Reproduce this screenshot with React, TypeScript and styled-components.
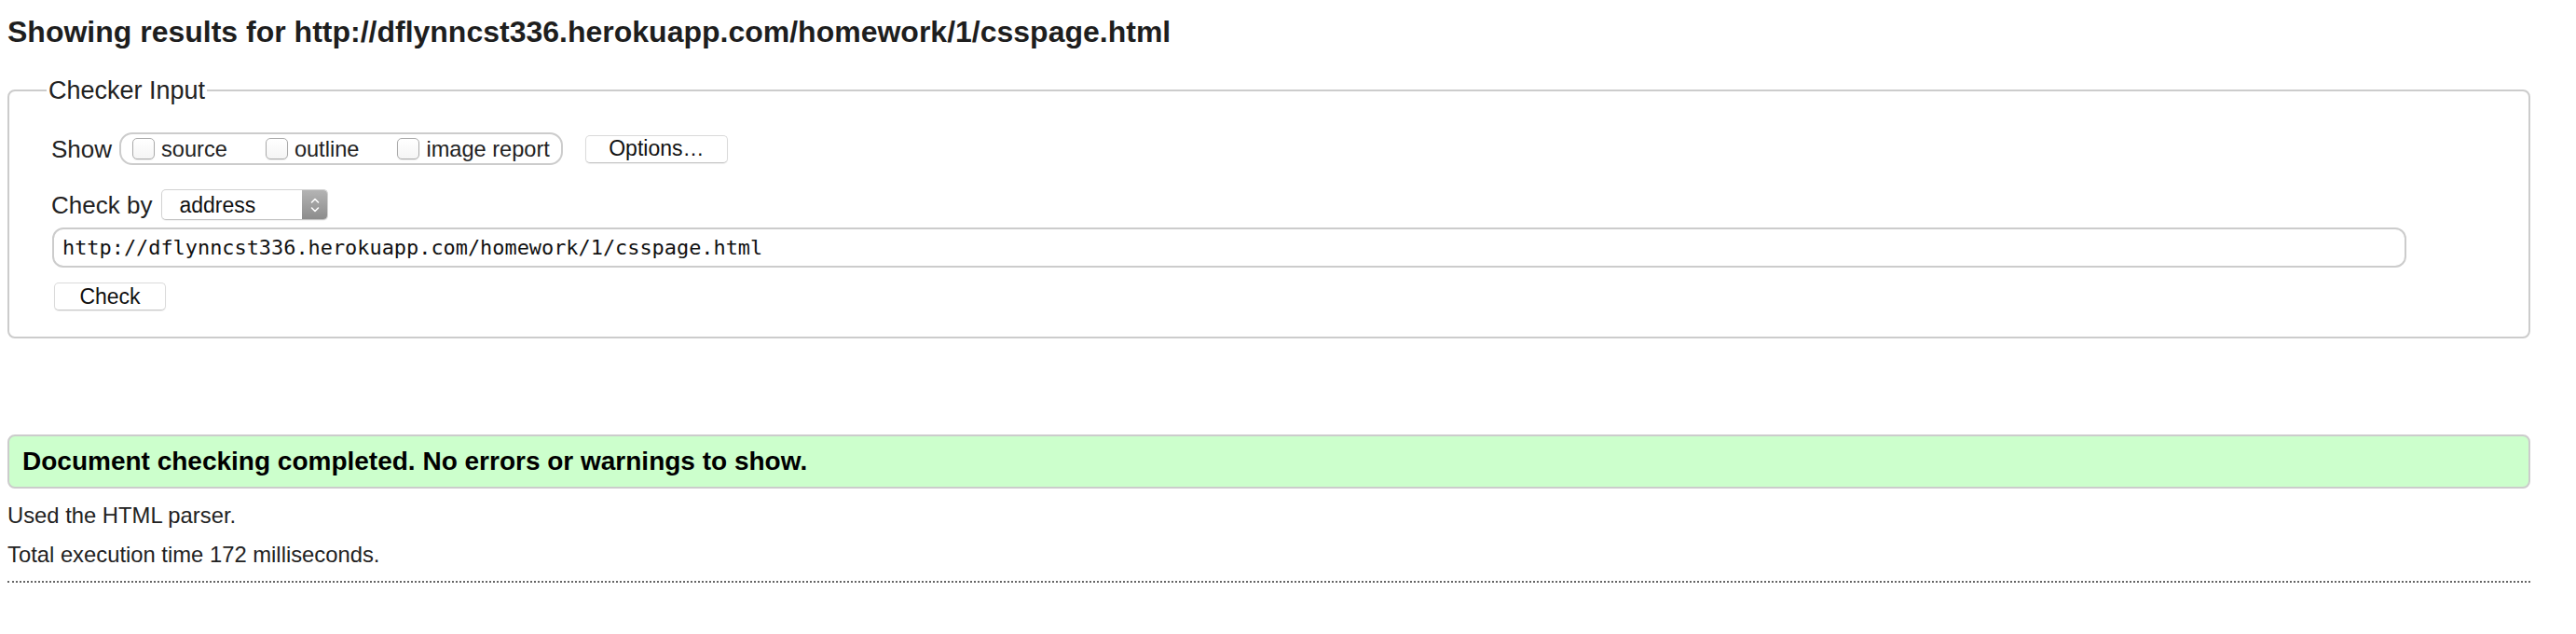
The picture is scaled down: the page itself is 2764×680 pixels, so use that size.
import styled, { createGlobalStyle } from "styled-components";

const GlobalStyle = createGlobalStyle`
  body {
    margin: 8px;
    background: #fff;
    color: #222;
    font-family: "Liberation Sans", Arial, Helvetica, sans-serif;
  }
`;

const Page = styled.div`
  display: flow-root;
  width: 2707px;
`;

const Title = styled.h2`
  margin: 8px 0 29px;
  font-size: 32px;
  line-height: 36px;
  font-weight: bold;
  color: #1e1e1e;
`;

const CheckerForm = styled.fieldset`
  margin: 0;
  padding: 29px 45px 28px 45px;
  border: 2px solid #ccc;
  border-radius: 8px;
`;

const Legend = styled.legend`
  margin-left: -5px;
  padding: 0 2px;
  font-size: 27px;
  line-height: 32px;
`;

const FieldRow = styled.div<{ $top?: number }>`
  display: flex;
  align-items: center;
  margin-top: ${(p) => p.$top ?? 0}px;
  font-size: 26px;
`;

const RowLabel = styled.span`
  font-size: 26px;
  line-height: 30px;
`;

const OptionGroup = styled.div`
  display: flex;
  align-items: center;
  gap: 41px;
  box-sizing: border-box;
  height: 35px;
  margin-left: 8px;
  padding: 0 12px;
  border: 2px solid #ccc;
  border-radius: 14px;
`;

const Option = styled.label`
  display: flex;
  align-items: center;
  gap: 7px;
  font-size: 23.6px;
  line-height: 28px;
`;

const Box = styled.input`
  appearance: none;
  margin: 0;
  width: 24px;
  height: 23px;
  border: 1px solid #aaa;
  border-radius: 5px;
  background: linear-gradient(#fff, #f5f5f5);
  box-shadow: 0 1px 1px rgba(0, 0, 0, 0.08);
`;

const Button = styled.button<{ $width: number; $left?: number }>`
  box-sizing: border-box;
  width: ${(p) => p.$width}px;
  height: 30px;
  margin-left: ${(p) => p.$left ?? 0}px;
  padding: 0;
  font-family: "Liberation Sans", Arial, sans-serif;
  font-size: 23px;
  color: #111;
  background: #fff;
  border: 1px solid #dadada;
  border-bottom-color: #c6c6c6;
  border-radius: 5px;
  box-shadow: 0 1px 1px rgba(0, 0, 0, 0.07);
`;

const SelectWrap = styled.div`
  position: relative;
  box-sizing: border-box;
  width: 179px;
  height: 33px;
  margin-left: 10px;
  border: 1px solid #d2d2d2;
  border-bottom-color: #c2c2c2;
  border-radius: 5px;
  background: #fff;
  overflow: hidden;
  box-shadow: 0 1px 1px rgba(0, 0, 0, 0.06);
`;

const Select = styled.select`
  appearance: none;
  width: 100%;
  height: 100%;
  margin: 0;
  padding: 0 0 0 18px;
  border: none;
  background: transparent;
  font-family: "Liberation Sans", Arial, sans-serif;
  font-size: 23px;
  color: #111;
`;

const Stepper = styled.span`
  position: absolute;
  top: 0;
  right: 0;
  bottom: 0;
  width: 27px;
  display: flex;
  align-items: center;
  justify-content: center;
  background: linear-gradient(#b4b4b4, #8c8c8c);
  pointer-events: none;
`;

const UrlInput = styled.input`
  box-sizing: border-box;
  width: 2526px;
  height: 43px;
  margin: 8px 0 0 1px;
  padding: 0 9px;
  border: 2px solid #ccc;
  border-radius: 12px;
  font-family: "DejaVu Sans Mono", "Liberation Mono", monospace;
  font-size: 21.9px;
  color: #111;
  outline: none;
`;

const SubmitRow = styled.div`
  margin-top: 16px;
  display: flex;
`;

const Success = styled.p`
  margin: 103px 0 0;
  padding: 11px 14px;
  border: 2px solid #ccc;
  border-radius: 8px;
  background: #ccffcc;
  color: #000;
  font-weight: bold;
  font-size: 28px;
  line-height: 32px;
`;

const Info = styled.p<{ $top: number }>`
  margin: ${(p) => p.$top}px 0 0;
  font-size: 23.8px;
  line-height: 28px;
  color: #222;
`;

const Rule = styled.div`
  margin-top: 14px;
  border-top: 2px dotted #666;
`;

const StepperIcon = () => (
  <svg width="12" height="24" viewBox="0 0 12 24" fill="none">
    <polyline points="2.5,9 6,5.5 9.5,9" stroke="#fff" strokeWidth="1.6" strokeLinecap="round" strokeLinejoin="round" />
    <polyline points="2.5,15 6,18.5 9.5,15" stroke="#fff" strokeWidth="1.6" strokeLinecap="round" strokeLinejoin="round" />
  </svg>
);

const url = "http://dflynncst336.herokuapp.com/homework/1/csspage.html";

const App = () => {
  return (
    <Page>
      <GlobalStyle />
      <Title>Showing results for {url}</Title>
      <CheckerForm>
        <Legend>Checker Input</Legend>
        <FieldRow>
          <RowLabel>Show</RowLabel>
          <OptionGroup>
            <Option>
              <Box type="checkbox" />
              source
            </Option>
            <Option>
              <Box type="checkbox" />
              outline
            </Option>
            <Option>
              <Box type="checkbox" />
              image report
            </Option>
          </OptionGroup>
          <Button type="button" $width={153} $left={24}>
            Options…
          </Button>
        </FieldRow>
        <FieldRow $top={26}>
          <RowLabel>Check by</RowLabel>
          <SelectWrap>
            <Select defaultValue="address">
              <option value="address">address</option>
              <option value="file">file upload</option>
              <option value="text">text input</option>
            </Select>
            <Stepper>
              <StepperIcon />
            </Stepper>
          </SelectWrap>
        </FieldRow>
        <UrlInput type="url" defaultValue={url} />
        <SubmitRow>
          <Button type="submit" $width={120} $left={3}>
            Check
          </Button>
        </SubmitRow>
      </CheckerForm>
      <Success>Document checking completed. No errors or warnings to show.</Success>
      <Info $top={15}>Used the HTML parser.</Info>
      <Info $top={14}>Total execution time 172 milliseconds.</Info>
      <Rule />
    </Page>
  );
};

export default App;
